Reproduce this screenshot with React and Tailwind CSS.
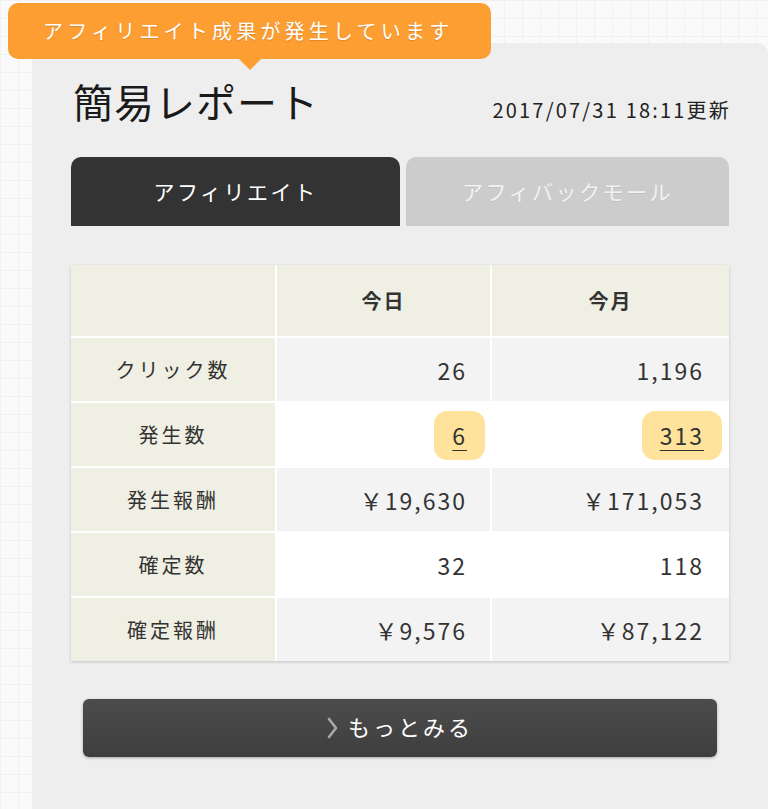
import React from 'react';

const rows = [
    { label: 'クリック数', today: '26', month: '1,196' },
    { label: '発生数', today: '6', month: '313', highlight: true },
    { label: '発生報酬', today: '￥19,630', month: '￥171,053' },
    { label: '確定数', today: '32', month: '118' },
    { label: '確定報酬', today: '￥9,576', month: '￥87,122' },
];

const Value = ({ value, highlight }) => {
    if (!highlight) return <span>{value}</span>;
    return (
        <span className="inline-block bg-[#ffe39c] rounded-[13px] px-[18px] py-[7px] -mr-[18px] underline underline-offset-[5px] decoration-[1px]">
            {value}
        </span>
    );
};

const App = () => {
    return (
        <div
            className="relative h-[809px] overflow-hidden bg-[#fafafa] bg-[image:linear-gradient(#f1f1f1_1px,transparent_1px),linear-gradient(90deg,#f1f1f1_1px,transparent_1px)] bg-[size:18px_18px] text-[#333]"
            style={{ fontFamily: '"Noto Sans CJK JP", "Noto Sans", sans-serif' }}
        >
            {/* Notification bubble */}
            <div className="absolute top-[3px] left-[8px] z-10 w-[483px] h-[56px] bg-[#fd9e33] rounded-[10px] flex items-center pl-[35px]">
                <span className="text-white text-[20px] tracking-[4.2px] [text-shadow:0_1px_1px_rgba(0,0,0,0.15)]">アフィリエイト成果が発生しています</span>
                <div className="absolute left-[231px] -bottom-[11px] w-0 h-0 border-l-[11px] border-r-[11px] border-t-[11px] border-l-transparent border-r-transparent border-t-[#fd9e33]"></div>
            </div>

            {/* Panel */}
            <div className="pt-[43px] pl-[32px]">
                <div className="bg-[#eeeeee] rounded-tr-[10px] h-[766px] px-[39px] pt-[38px]">
                    {/* Title row */}
                    <div className="flex justify-between items-end">
                        <h1 className="text-[40px] leading-none text-[#1a1a1a] tracking-[1px] pl-[2px]">簡易レポート</h1>
                        <p className="text-[20px] leading-none tracking-[2.2px] text-[#222] pb-[1px] -mr-[2px]">2017/07/31 18:11更新</p>
                    </div>

                    {/* Tabs */}
                    <div className="flex gap-[6px] mt-[36px]">
                        <div className="w-[329px] h-[69px] bg-[#333333] rounded-t-[10px] flex items-center justify-center text-white text-[21px] tracking-[2.5px]">
                            アフィリエイト
                        </div>
                        <div className="flex-1 h-[69px] bg-[#cccccc] rounded-t-[10px] flex items-center justify-center text-[#f2f2f2] text-[21px] tracking-[2.5px] [text-shadow:0_1px_0_rgba(0,0,0,0.08)]">
                            アフィバックモール
                        </div>
                    </div>

                    {/* Report table */}
                    <div className="mt-[39px] grid grid-cols-[204px_213px_1fr] gap-[2px] bg-white shadow-[0_1px_3px_rgba(0,0,0,0.18)]">
                        <div className="h-[71px] bg-[#f0efe3]"></div>
                        <div className="h-[71px] bg-[#f0efe3] flex items-center justify-center text-[20px] font-bold tracking-[2px]">今日</div>
                        <div className="h-[71px] bg-[#f0efe3] flex items-center justify-center text-[20px] font-bold tracking-[2px]">今月</div>
                        {rows.map((r, i) => {
                            const cellBg = i % 2 === 0 ? 'bg-[#f3f3f3]' : 'bg-white';
                            return (
                                <React.Fragment key={r.label}>
                                    <div className="h-[63px] bg-[#f0efe3] flex items-center justify-center text-[20px] tracking-[3px]">{r.label}</div>
                                    <div className={`h-[63px] ${cellBg} flex items-center justify-end pr-[23px] pt-[2px] text-[23px] tracking-[2px]`}>
                                        <Value value={r.today} highlight={r.highlight} />
                                    </div>
                                    <div className={`h-[63px] ${cellBg} flex items-center justify-end pr-[25px] pt-[2px] text-[23px] tracking-[2px]`}>
                                        <Value value={r.month} highlight={r.highlight} />
                                    </div>
                                </React.Fragment>
                            );
                        })}
                    </div>

                    {/* More button */}
                    <div className="px-[12px] mt-[38px]">
                        <button className="w-full h-[58px] rounded-[6px] bg-gradient-to-b from-[#4c4c4c] to-[#3e3e3e] shadow-[0_1px_3px_rgba(0,0,0,0.3)] flex items-center justify-center gap-[9px] text-white text-[22px] tracking-[3px] pb-[3px]">
                            <svg width="12" height="22" viewBox="0 0 12 22" fill="none" className="mt-[3px]">
                                <polyline points="2,2 9,11 2,20" stroke="#a8a8a8" strokeWidth="2.6" strokeLinecap="round" strokeLinejoin="round" />
                            </svg>
                            もっとみる
                        </button>
                    </div>
                </div>
            </div>
        </div>
    );
};

export default App;
